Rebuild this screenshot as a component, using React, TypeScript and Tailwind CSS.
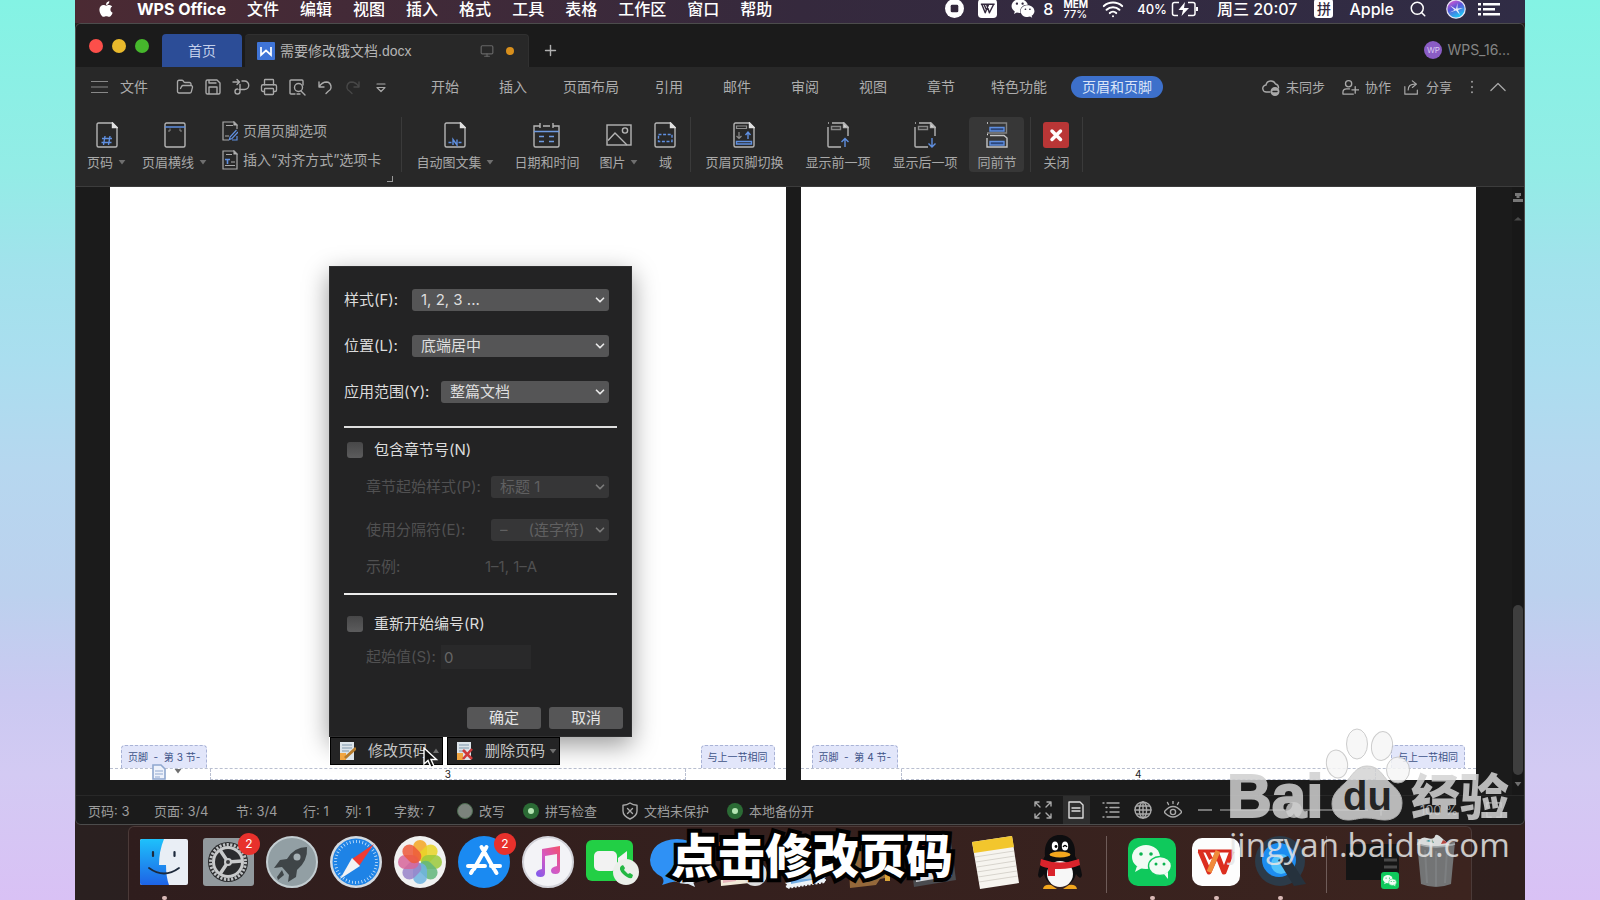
import React from 'react';
import { FaApple, FaWeixin } from 'react-icons/fa';
import {
    ChevronDown,
    FolderOpen,
    Monitor,
    Plus,
    Printer,
    Search,
    Wifi,
} from 'lucide-react';

type IconProps = { className?: string };

const APP_MENUS = ['文件', '编辑', '视图', '插入', '格式', '工具', '表格', '工作区', '窗口', '帮助'];
const RIBBON_TABS = ['开始', '插入', '页面布局', '引用', '邮件', '审阅', '视图', '章节', '特色功能'];

/* ---------- small shared pieces ---------- */

function Caret({ up = false }: { up?: boolean }) {
    return (
        <svg viewBox="0 0 8 6" className="w-2 h-1.5 shrink-0" fill="#6f6f6f" aria-hidden="true">
            {up ? <path d="M1 5 4 .6 7 5z" /> : <path d="M.6 1h6.8L4 5.4z" />}
        </svg>
    );
}

function Line({ children, className = 'w-[18px] h-[18px]', box = '0 0 18 18' }: { children: React.ReactNode; className?: string; box?: string }) {
    return (
        <svg viewBox={box} className={className} fill="none" stroke="#a9a9a9" strokeWidth="1.4" strokeLinecap="round" strokeLinejoin="round" aria-hidden="true">
            {children}
        </svg>
    );
}

/* ---------- macOS menu bar ---------- */

function WpsGlyph({ className }: IconProps) {
    return (
        <svg viewBox="0 0 20 20" className={className} aria-hidden="true">
            <rect width="20" height="20" rx="4" fill="#fff" />
            <path d="M3 5.500h14.500M4 5.500l3.600 9L11 6M9 5.500l3 9 4.500-9M6.500 6l2.700 6" fill="none" stroke="#33283c" strokeWidth="1.500" strokeLinejoin="round" />
        </svg>
    );
}

function MenuBar() {
    return (
        <header className="flex h-[23px] shrink-0 items-center bg-linear-to-r from-[#4b2a33] via-[#35293d] to-[#302c45] pr-[25px] pb-1.5 pl-[22px] text-base leading-5 font-medium text-white">
            <FaApple className="h-[18px] w-[18px]" />
            <nav className="flex items-center gap-[21px] pl-[22px] whitespace-nowrap">
                <button className="font-bold">WPS Office</button>
                {APP_MENUS.map((m) => <button key={m}>{m}</button>)}
            </nav>
            <div className="ml-auto flex items-center whitespace-nowrap">
                <svg viewBox="0 0 20 20" className="h-[19px] w-[19px]" aria-hidden="true">
                    <circle cx="10" cy="10" r="10" fill="#fff" />
                    <rect x="6" y="6" width="8" height="8" rx="1.5" fill="#33283c" />
                </svg>
                <WpsGlyph className="ml-[14px] h-[19px] w-[19px]" />
                <FaWeixin className="ml-[14px] h-[23px] w-6" />
                <span className="ml-2">8</span>
                <span className="ml-2.5 flex flex-col text-[11px] leading-[10px]">
                    <b className="text-[10px]">MEM</b>
                    <span>77%</span>
                </span>
                <Wifi className="ml-[13px] h-[22px] w-6" strokeWidth={2.2} />
                <span className="ml-3 text-[13px]">40%</span>
                <svg viewBox="0 0 28 16" className="ml-1 h-4 w-7" fill="none" stroke="#fff" strokeWidth="1.5" aria-hidden="true">
                    <path d="M8 1.5H3.5q-2 0-2 2v9q0 2 2 2H7M17 1.5h5q2 0 2 2v9q0 2-2 2h-5" />
                    <path d="M14 1 7.5 9H12l-1.500 6L18 7h-5z" fill="#fff" stroke="none" />
                    <path d="M26 6v4" strokeWidth="2" />
                </svg>
                <span className="ml-[18px]">周三 20:07</span>
                <span className="ml-[17px] flex h-[19px] w-[19px] items-center justify-center rounded-[3px] bg-white text-[14px] leading-none text-[#33283c]">拼</span>
                <span className="ml-4">Apple</span>
                <Search className="ml-[15px] h-[18px] w-[18px]" />
                <svg viewBox="0 0 20 20" className="ml-[19px] h-5 w-5" aria-hidden="true">
                    <defs>
                        <linearGradient id="siri" x1="0" y1="0" x2=".5" y2="1">
                            <stop offset="0" stopColor="#ff5ad0" />
                            <stop offset=".5" stopColor="#5b55d8" />
                            <stop offset="1" stopColor="#1ec8f5" />
                        </linearGradient>
                    </defs>
                    <circle cx="10" cy="10" r="9.200" fill="url(#siri)" stroke="#e8e4f4" strokeWidth="1.200" />
                    <path d="M10 10 4 6.500 8.500 11 3.500 13.500 10 11.500 14 16 12 11 17 9 11.500 9.500 11.500 4z" fill="#fff" opacity=".85" />
                </svg>
                <svg viewBox="0 0 22 14" className="ml-3 h-3.5 w-[22px]" fill="#fff" aria-hidden="true">
                    <path d="M0 1h3v2.500H0zM0 6h3v2.500H0zM0 11h3v2.500H0zM5 1h17v2.500H5zM5 6h12v2.500H5zM5 11h17v2.500H5z" />
                </svg>
            </div>
        </header>
    );
}

/* ---------- window title bar ---------- */

function TitleBar() {
    return (
        <div className="flex h-[43px] shrink-0 items-end bg-[#1b1b1b] pr-[14px] pl-[13px] text-sm leading-5">
            <div className="flex gap-[9px] self-center">
                <button aria-label="关闭窗口" className="h-3.5 w-3.5 rounded-full bg-[#fc4f4a]" />
                <button aria-label="最小化" className="h-3.5 w-3.5 rounded-full bg-[#e9b92c]" />
                <button aria-label="全屏" className="h-3.5 w-3.5 rounded-full bg-[#46b72c]" />
            </div>
            <button className="ml-[13px] h-[33px] w-20 rounded-t-[4px] bg-[#2c4d97] text-[#c3cfea]">首页</button>
            <div className="ml-[3px] flex h-[33px] w-[284px] items-center rounded-t-[4px] border-t border-r border-[#303030] bg-[#282828] pr-[14px] pl-3 text-[#b4b4b4]">
                <svg viewBox="0 0 18 18" className="h-[18px] w-[18px]" aria-hidden="true">
                    <rect width="18" height="18" rx="1" fill="#3f74d6" />
                    <path d="M4 5v8l5-4.500L14 13V5" fill="none" stroke="#fff" strokeWidth="1.700" />
                </svg>
                <span className="ml-[5px] font-['Liberation_Sans','Noto_Sans_CJK_SC',sans-serif]">需要修改饿文档.docx</span>
                <Monitor className="ml-auto h-3.5 w-3.5 text-[#666]" strokeWidth={2} />
                <span className="ml-3 h-2 w-2 rounded-full bg-[#d88f1c]" />
            </div>
            <button aria-label="新建标签" className="mb-2 ml-[13px] text-[#b0b0b0]"><Plus className="h-[17px] w-[17px]" /></button>
            <div className="mb-[7px] ml-auto flex items-center gap-[5px] text-[#858585]">
                <span className="flex h-[18px] w-[18px] items-center justify-center rounded-full bg-[#8a5cc4] text-[8px] text-[#d9c9f0]">WP</span>
                WPS_16...
            </div>
        </div>
    );
}

/* ---------- tabs and quick access ---------- */

function QuickTools() {
    return (
        <div className="ml-7 flex items-center gap-2.5 text-[#a9a9a9]">
            <button aria-label="打开"><FolderOpen className="h-[18px] w-[18px]" strokeWidth={1.8} /></button>
            <button aria-label="保存">
                <Line><path d="M2 3.500Q2 2 3.500 2H13l3 3v9.500q0 1.500-1.500 1.500h-11Q2 16 2 14.500zM5 16V9h8v7M5 2v3h7" /></Line>
            </button>
            <button aria-label="输出为PDF">
                <Line><path d="M1 4h6M5 1.500 7.500 4 5 6.500M10 3h2.500a4 4 0 0 1 0 8.500H7M8 6.500v7a2.500 2.500 0 1 1-2.500-2.500" /></Line>
            </button>
            <button aria-label="打印"><Printer className="h-[18px] w-[18px]" strokeWidth={1.8} /></button>
            <button aria-label="打印预览">
                <Line><path d="M7 16H3q-1 0-1-1V3q0-1 1-1h11q1 0 1 1v4M13 13l4 4M12 16H9" /><circle cx="10.500" cy="9.500" r="4" /></Line>
            </button>
            <button aria-label="撤销">
                <Line><path d="M3 4v5h5M3 9q3-5 7.500-5a4.800 4.800 0 0 1 2 9L10 15.500" /></Line>
            </button>
            <button aria-label="恢复" disabled>
                <Line><path d="M15 4v5h-5M15 9q-3-5-7.500-5a4.800 4.800 0 0 0-2 9L8 15.500" stroke="#474747" /></Line>
            </button>
            <button aria-label="自定义快速访问">
                <Line><path d="M5 6h8M5 9.500h8L9 13.500z" strokeWidth="1.200" /></Line>
            </button>
        </div>
    );
}

function TabRow() {
    return (
        <div className="flex h-[42px] shrink-0 items-center pr-[18px] pb-0.5 pl-[15px] text-sm leading-5 whitespace-nowrap text-[#adadad]">
            <button className="flex items-center gap-3">
                <svg viewBox="0 0 17 12" className="h-3 w-[17px]" stroke="#888" aria-hidden="true"><path d="M0 .5h17M0 6h17M0 11.500h17" /></svg>
                文件
            </button>
            <QuickTools />
            <nav className="ml-[21px] flex items-center">
                {RIBBON_TABS.map((t) => (
                    <button key={t} className={t.length > 2 ? 'px-4' : 'px-5'}>{t}</button>
                ))}
                <button className="ml-2 h-[22px] rounded-full bg-[#3d70cb] px-[11px] text-[#dbe5f7]">页眉和页脚</button>
            </nav>
            <div className="ml-auto flex items-center text-[13px]">
                <button className="flex items-center gap-1.5">
                    <Line><path d="M8 14H4.500a3.500 3.500 0 0 1-.5-7 5 5 0 0 1 9.500-1 4 4 0 0 1 3 4" /><circle cx="13" cy="13.500" r="3.800" fill="#a9a9a9" /><path d="M11 13.500h4" stroke="#282828" /></Line>
                    未同步
                </button>
                <button className="ml-[17px] flex items-center gap-1.5">
                    <Line className="h-[17px] w-[17px]"><circle cx="7" cy="5" r="3.300" /><path d="M1 16v-2q0-3.500 4-3.500h3M1 16h11M14 8v7M10.500 11.500h7" /></Line>
                    协作
                </button>
                <button className="ml-[13px] flex items-center gap-[7px]">
                    <Line className="h-[15px] w-[15px]"><path d="M1 8v9h15v-5M5 12q0-7 8-7M10 1l5 4-5 4" /></Line>
                    分享
                </button>
                <button aria-label="更多" className="ml-[18px]">
                    <svg viewBox="0 0 4 16" className="h-3.5 w-1" fill="#999" aria-hidden="true"><circle cx="2" cy="2" r="1.200" /><circle cx="2" cy="8" r="1.200" /><circle cx="2" cy="14" r="1.200" /></svg>
                </button>
                <button aria-label="收起功能区" className="ml-4"><Line className="h-4 w-4"><path d="M1 13 9 5l8 8" /></Line></button>
            </div>
        </div>
    );
}

/* ---------- ribbon ---------- */

function Sheet({ children }: { children?: React.ReactNode }) {
    return (
        <svg viewBox="0 0 22 26" className="h-[26px] w-[22px]" fill="none" strokeWidth="1.400" aria-hidden="true">
            <path d="M16.500 1H2.500Q1 1 1 2.500v21Q1 25 2.500 25h17q1.500 0 1.500-1.500v-18z" stroke="#b5b5b5" />
            <path d="M16.500 1v4.500H21z" fill="#e0e0e0" stroke="#e0e0e0" />
            {children}
        </svg>
    );
}

function RibbonItem({ icon, label, caret = false, active = false }: { icon: React.ReactNode; label: string; caret?: boolean; active?: boolean }) {
    return (
        <button className={`flex h-[55px] flex-col items-center rounded pt-[5px] ${active ? 'bg-[#373737] px-2' : ''}`}>
            <span className="flex h-[26px] items-center">{icon}</span>
            <span className="mt-1 flex items-center gap-[5px] leading-5">
                {label}
                {caret && <Caret />}
            </span>
        </button>
    );
}

function Divider() {
    return <div className="h-[55px] w-px bg-[#3a3a3a]" />;
}

function Ribbon() {
    return (
        <div className="flex h-[78px] shrink-0 border-b border-[#3c3c3c] pt-2 pl-[11px] text-[13px] whitespace-nowrap text-[#a8a8a8]">
            <div className="relative flex gap-4 pr-5">
                <RibbonItem label="页码" caret icon={<Sheet><path d="M9 14l-1.500 9M14 14l-1.500 9M6 16.500h10M5.500 20.500h10" stroke="#5f8fe0" /></Sheet>} />
                <RibbonItem
                    label="页眉横线"
                    caret
                    icon={(
                        <svg viewBox="0 0 22 26" className="h-[26px] w-[22px]" fill="none" strokeWidth="1.400" aria-hidden="true">
                            <rect x="1" y="1" width="20" height="24" rx="1.500" stroke="#b5b5b5" />
                            <path d="M1 5h20" stroke="#5f8fe0" />
                            <path d="M4 9h2V6.500M18 9h-2V6.500" stroke="#888" strokeWidth="1" />
                        </svg>
                    )}
                />
                <div className="-ml-px flex flex-col gap-[9px] pt-1 text-sm leading-5">
                    <button className="flex items-center gap-[5px]">
                        <svg viewBox="0 0 16 20" className="h-5 w-4" fill="none" stroke="#a9a9a9" strokeWidth="1.200" aria-hidden="true">
                            <path d="M15 8V4l-3-3H1v18h6M4 4.500h7M3 15h4" />
                            <path d="M12 1v3h3z" fill="#ddd" />
                            <path d="M14.500 9 8 16l-.5 2.500L10 17.500 16 11M15 15v4h-5" stroke="#5f8fe0" />
                        </svg>
                        页眉页脚选项
                    </button>
                    <button className="flex items-center gap-[5px]">
                        <svg viewBox="0 0 16 20" className="h-5 w-4" fill="none" stroke="#a9a9a9" strokeWidth="1.200" aria-hidden="true">
                            <path d="M12 1H1v18h14V4zM4 4.500h6M3 15.500h10M9 12h4" />
                            <path d="M12 1v3h3z" fill="#ddd" />
                            <path d="M3 9.500h5M5.500 9.500V14" stroke="#5f8fe0" strokeWidth="1.600" />
                        </svg>
                        插入“对齐方式”选项卡
                    </button>
                </div>
                <span className="absolute right-2 bottom-1 h-1.5 w-1.5 border-r border-b border-[#999]" />
            </div>
            <Divider />
            <div className="flex gap-5 px-[14px]">
                <RibbonItem label="自动图文集" caret icon={<Sheet><path d="M4.500 20.500h3M14.500 20.500h3M9 23v-5.500l4 5.500v-5.500" stroke="#5f8fe0" /></Sheet>} />
                <RibbonItem
                    label="日期和时间"
                    icon={(
                        <svg viewBox="0 0 27 26" className="h-[26px] w-[27px]" fill="none" stroke="#b5b5b5" strokeWidth="1.400" aria-hidden="true">
                            <path d="M7 4H1v19.500Q1 25 2.500 25h22q1.500 0 1.500-1.500V4h-6M10 4h7M7 1v5M20 1v5" />
                            <path d="M1 9.500h25M6 14.500h5M16 14.500h5M6 19.500h5M16 19.500h5" stroke="#6f9ae0" />
                        </svg>
                    )}
                />
                <RibbonItem
                    label="图片"
                    caret
                    icon={(
                        <svg viewBox="0 0 26 22" className="h-[22px] w-[26px]" fill="none" stroke="#b5b5b5" strokeWidth="1.400" aria-hidden="true">
                            <rect x="1" y="1" width="24" height="20" />
                            <path d="M2 16.500 9 9l12 12" />
                            <circle cx="19" cy="6.500" r="2.600" />
                        </svg>
                    )}
                />
                <div className="-ml-1 flex">
                    <RibbonItem label="域" icon={<Sheet><rect x="4.500" y="12.500" width="13.500" height="7" stroke="#5f8fe0" strokeDasharray="3 1.600" /></Sheet>} />
                </div>
            </div>
            <Divider />
            <div className="flex gap-[22px] pr-3 pl-[14px]">
                <RibbonItem
                    label="页眉页脚切换"
                    icon={<Sheet><path d="M3.500 4h10v2.500h-10zM6 10v6M3.500 14 6 16.500 8.500 14" stroke="#8d8d8d" strokeWidth="1.200" /><path d="M15 17v-6.500M12.500 13 15 10l2.500 3M3.500 19.500h15v2.500h-15z" stroke="#5f8fe0" /></Sheet>}
                />
                <RibbonItem
                    label="显示前一项"
                    icon={(
                        <svg viewBox="0 0 22 26" className="h-[26px] w-[22px]" fill="none" stroke="#b5b5b5" strokeWidth="1.400" aria-hidden="true">
                            <path d="M1 5v19q0 1 1 1h12M1 1h1M5 1h12l4 4v9" />
                            <path d="M16.500 1v4.500H21z" fill="#e0e0e0" />
                            <path d="M4.500 4.500h9v3h-9z" stroke="#888" />
                            <path d="M18 25v-8M14.500 20 18 16.500l3.500 3.500" stroke="#5f8fe0" />
                        </svg>
                    )}
                />
                <RibbonItem
                    label="显示后一项"
                    icon={(
                        <svg viewBox="0 0 22 26" className="h-[26px] w-[22px]" fill="none" stroke="#b5b5b5" strokeWidth="1.400" aria-hidden="true">
                            <path d="M1 5v19q0 1 1 1h12M1 1h1M5 1h12l4 4v9" />
                            <path d="M16.500 1v4.500H21z" fill="#e0e0e0" />
                            <path d="M4.500 4.500h9v3h-9z" stroke="#888" />
                            <path d="M18 16v8.500M14.500 21.500 18 25l3.500-3.500" stroke="#5f8fe0" />
                        </svg>
                    )}
                />
            </div>
            <RibbonItem
                active
                label="同前节"
                icon={(
                    <svg viewBox="0 0 22 26" className="h-[26px] w-[22px]" fill="none" strokeWidth="1.400" aria-hidden="true">
                        <path d="M4 1h16.500v10H1" stroke="#858585" />
                        <path d="M1 1h1M1 12.500h1" stroke="#e0e0e0" />
                        <path d="M4 5.500h14V9H4zM4 19.500h14V23H4z" stroke="#5f8fe0" fill="#2c477c" />
                        <path d="M4 13.500h14l3 2.500v9H1v-9" stroke="#c5c5c5" />
                    </svg>
                )}
            />
            <div className="flex gap-3 pl-1.5">
                <Divider />
                <RibbonItem
                    label="关闭"
                    icon={(
                        <svg viewBox="0 0 26 26" className="h-[26px] w-[26px]" aria-hidden="true">
                            <rect width="26" height="26" rx="3" fill="#b93636" />
                            <path d="M9 9l8.500 8.500M17.500 9 9 17.500" stroke="#fff" strokeWidth="3.500" strokeLinecap="round" />
                        </svg>
                    )}
                />
                <Divider />
            </div>
        </div>
    );
}

/* ---------- page number popup ---------- */

function Dropdown({ id, value, disabled = false, className }: { id: string; value: string; disabled?: boolean; className: string }) {
    return (
        <div className={`relative ${className}`}>
            <select
                id={id}
                defaultValue={value}
                disabled={disabled}
                className={`block h-[22px] w-full appearance-none rounded-[3px] pl-[9px] leading-5 opacity-100 ${disabled ? 'bg-[#363637] text-[#606061]' : 'bg-[#555556] text-[#dedede]'}`}
            >
                <option>{value}</option>
            </select>
            <ChevronDown className={`pointer-events-none absolute top-1 right-0.5 h-3.5 w-3.5 ${disabled ? 'text-[#7b7b7b]' : 'text-[#e8e8e8]'}`} strokeWidth={3} />
        </div>
    );
}

function NumberDialog() {
    const check = 'h-4 w-4 appearance-none rounded-[3px] bg-linear-to-b from-[#474748] to-[#5c5c5d]';
    return (
        <form className="flex w-[303px] flex-col border border-[#2f2f30] bg-[#232324] px-[14px] pt-[22px] pb-[7px] text-[15px] leading-5 text-[#dcdcdc] shadow-[0_8px_24px_rgba(0,0,0,0.4)]">
            <div className="flex flex-col gap-6 pr-2">
                <div className="flex h-[22px] items-center justify-between">
                    <label htmlFor="fmt">样式(F):</label>
                    <Dropdown id="fmt" value="1, 2, 3 ..." className="w-[197px]" />
                </div>
                <div className="flex h-[22px] items-center justify-between">
                    <label htmlFor="pos">位置(L):</label>
                    <Dropdown id="pos" value="底端居中" className="w-[197px]" />
                </div>
                <div className="flex h-[22px] items-center justify-between">
                    <label htmlFor="scope">应用范围(Y):</label>
                    <Dropdown id="scope" value="整篇文档" className="w-[168px]" />
                </div>
            </div>
            <hr className="mt-[23px] border-t-2 border-[#dedede]" />
            <div className="mt-[14px] flex h-4 items-center gap-[11px] pl-[3px]">
                <input id="chapter" type="checkbox" className={check} />
                <label htmlFor="chapter">包含章节号(N)</label>
            </div>
            <div className="mt-[18px] flex flex-col gap-[21px] pr-2 pl-[22px] text-[#505051]">
                <div className="flex h-[22px] items-center justify-between">
                    <label htmlFor="chapter-style">章节起始样式(P):</label>
                    <Dropdown id="chapter-style" value="标题 1" disabled className="w-[118px]" />
                </div>
                <div className="flex h-[22px] items-center justify-between">
                    <label htmlFor="sep">使用分隔符(E):</label>
                    <Dropdown id="sep" value={'–\u00a0\u00a0\u00a0\u00a0 (连字符)'} disabled className="w-[118px]" />
                </div>
            </div>
            <div className="mt-4 flex h-5 items-center pl-[22px] text-[#505051]">
                <span className="w-[119px]">示例:</span>
                <output>1–1, 1–A</output>
            </div>
            <hr className="mt-4 border-t-2 border-[#ececec]" />
            <div className="mt-[21px] flex h-4 items-center gap-[11px] pl-[3px]">
                <input id="restart" type="checkbox" className={check} />
                <label htmlFor="restart">重新开始编号(R)</label>
            </div>
            <div className="mt-[13px] flex h-6 items-center pl-[22px] text-[#505051]">
                <label htmlFor="start" className="w-[75px]">起始值(S):</label>
                <input id="start" defaultValue="0" disabled className="h-6 w-[90px] bg-[#29292a] px-[3px] text-[#666]" />
            </div>
            <div className="-mr-1.5 mt-[38px] flex justify-end gap-2 text-[#e4e4e4]">
                <button type="button" className="h-[22px] w-[74px] rounded-[3px] bg-[#565657]">确定</button>
                <button type="button" className="h-[22px] w-[74px] rounded-[3px] bg-[#565657]">取消</button>
            </div>
        </form>
    );
}

function PageTool({ label, remove = false }: { label: string; remove?: boolean }) {
    return (
        <button className="flex h-7 w-[113px] items-center border border-black bg-[#242425] pl-[9px] text-[15px] leading-5 text-[#c4c4c4]">
            <svg viewBox="0 0 16 18" className="h-[18px] w-4" aria-hidden="true">
                <path d="M0 0h14v18H0z" fill="#dce4ea" />
                <path d="M2 3h10M2 6h10M2 9h7" stroke="#7f97ab" />
                <path d="M0 11h6v7H0z" fill="#f2a642" />
                {remove
                    ? <path d="m6 8 9 9M15 7l-9 10" stroke="#cf3a3a" strokeWidth="2.600" />
                    : <path d="m5 16 11-10" stroke="#b57b2c" strokeWidth="3" />}
            </svg>
            <span className="mr-1 ml-3">{label}</span>
            <Caret up={!remove} />
        </button>
    );
}

/* ---------- document area ---------- */

function Paper({ section, children }: { section: number; children?: React.ReactNode }) {
    const tag = 'flex h-[23px] items-center border border-b-0 border-dashed border-[#a9b3d6] bg-[#e2e6fa] px-1.5 text-[10px] text-[#3f5488]';
    return (
        <section className="relative flex min-w-0 flex-1 flex-col justify-end bg-white">
            <div className="flex justify-between border-b border-dashed border-[#b9bfd0] px-[11px]">
                <span className={`${tag} rounded-t whitespace-pre`}>{`页脚  -  第 ${section} 节-`}</span>
                <span className={`${tag} rounded-t`}>与上一节相同</span>
            </div>
            <div className="mx-[100px] flex h-[11px] items-center justify-center border-x border-b border-dashed border-[#b9bfd0] text-[10px] leading-none text-[#222]">{section}</div>
            {children}
        </section>
    );
}

function DocumentArea() {
    return (
        <main className="flex min-h-0 flex-1 bg-[#1b1b1b] pl-[34px]">
            <div className="flex flex-1 gap-[15px] pr-9 pb-[15px]">
                <Paper section={3}>
                    <div className="absolute bottom-0 left-[42px] flex items-start gap-2">
                        <svg viewBox="0 0 14 16" className="h-4 w-3.5" fill="none" stroke="#8fa7cf" aria-hidden="true">
                            <path d="M1 1h8l4 4v10H1z" fill="#eef2fb" strokeWidth="1.600" />
                            <path d="M3 7h8M3 10h8M3 13h5" strokeWidth="1.200" />
                        </svg>
                        <span className="mt-1 flex"><Caret /></span>
                    </div>
                    <div className="absolute bottom-[15px] left-[219px] z-10">
                        <NumberDialog />
                        <div className="flex w-max gap-1 bg-white pl-px">
                            <PageTool label="修改页码" />
                            <PageTool label="删除页码" remove />
                        </div>
                        <svg viewBox="0 0 16 22" className="pointer-events-none absolute -bottom-1 left-[94px] h-[22px] w-4" aria-hidden="true">
                            <path d="M1 1v16l4-3.500 3 7 3-1.300-3-6.700h5.500z" fill="#111" stroke="#fff" strokeWidth="1.400" />
                        </svg>
                    </div>
                </Paper>
                <Paper section={4} />
            </div>
            <div className="flex w-3 flex-col items-center bg-[#181818] pt-1.5 pb-2">
                <svg viewBox="0 0 10 32" className="h-8 w-2.5" fill="#777" aria-hidden="true">
                    <path d="M2 0h6v3H6.500v2h-3V3H2zM0 6h10v3H0z" />
                    <path d="M1 27.500 5 24l4 3.500z" fill="#4a4a4a" />
                </svg>
                <div className="mt-auto h-[170px] w-2.5 rounded-full bg-[#3e3e3e]" />
                <span className="mt-1.5 flex"><Caret /></span>
            </div>
        </main>
    );
}

/* ---------- status bar ---------- */

function GreenDot() {
    return <span className="flex h-4 w-4 items-center justify-center rounded-full bg-[#2b6b35]"><span className="h-1.5 w-1.5 rounded-full bg-[#b6e6b4]" /></span>;
}

function StatusBar() {
    return (
        <footer className="flex h-[29px] shrink-0 items-center border-t border-[#282828] bg-[#1b1b1b] pr-[22px] pl-3 text-[13px] leading-5 whitespace-nowrap text-[#9d9d9d]">
            <div className="flex items-center pt-0.5">
                <span className="w-[66px]">页码: 3</span>
                <span className="w-[82px]">页面: 3/4</span>
                <span className="w-[67px]">节: 3/4</span>
                <span className="w-[42px]">行: 1</span>
                <span className="w-[49px]">列: 1</span>
                <span className="w-[63px]">字数: 7</span>
                <span className="flex items-center gap-1.5"><span className="h-4 w-4 rounded-full border border-[#4c6b50] bg-[#7b837c]" />改写</span>
                <span className="ml-[18px] flex items-center gap-1.5"><GreenDot />拼写检查</span>
                <span className="ml-6 flex items-center gap-[5px]">
                    <Line><path d="M9 1q3 2.300 7 2.300V9q0 5-7 8-7-3-7-8V3.300Q6 3.300 9 1zM6.500 6.500l5 5M11.500 6.500l-5 5" /></Line>
                    文档未保护
                </span>
                <span className="ml-[18px] flex items-center gap-1.5"><GreenDot />本地备份开</span>
            </div>
            <div className="ml-auto flex h-full items-center">
                <button aria-label="全屏显示"><Line><path d="M1 5V1h4M1 1l5 5M13 1h4v4M17 1l-5 5M1 13v4h4M1 17l5-5M13 17h4v-4M17 17l-5-5" /></Line></button>
                <button aria-label="页面视图" className="ml-[11px] flex h-full w-[27px] items-center justify-center bg-[#2e2e2e]">
                    <Line><path d="M2 1h11l3 3v13H2zM5 7h8M5 10h8" stroke="#dcdcdc" /></Line>
                </button>
                <button aria-label="大纲视图" className="ml-3"><Line><path d="M1 2h1M5 2h12M4 6.500h1M8 6.500h9M4 11h1M8 11h9M1 16h1M5 16h12" /></Line></button>
                <button aria-label="Web视图" className="ml-[14px]"><Line><circle cx="9" cy="9" r="8" /><ellipse cx="9" cy="9" rx="3.600" ry="8" /><path d="M9 1v16M1 9h16M2.500 5h13M2.500 13h13" /></Line></button>
                <button aria-label="护眼模式" className="ml-3"><Line><path d="M0 11q9-11 18 0-9 10-18 0zM9 0v2.500M3.500 1.500l1 2M14.500 1.500l-1 2" /><circle cx="9" cy="11" r="2.600" /></Line></button>
                <button aria-label="缩小" className="ml-4 h-0.5 w-3.5 bg-[#777]" />
                <input
                    aria-label="缩放"
                    type="range"
                    defaultValue={50}
                    className="ml-2 h-4 w-[148px] appearance-none bg-transparent [&::-webkit-slider-runnable-track]:h-0.5 [&::-webkit-slider-runnable-track]:bg-[#666] [&::-webkit-slider-thumb]:-mt-[7px] [&::-webkit-slider-thumb]:h-4 [&::-webkit-slider-thumb]:w-4 [&::-webkit-slider-thumb]:appearance-none [&::-webkit-slider-thumb]:rounded-full [&::-webkit-slider-thumb]:bg-[#aaa]"
                />
                <button aria-label="放大" className="ml-1"><Plus className="h-[18px] w-[18px]" strokeWidth={1.5} /></button>
                <span className="ml-[30px]">100 %</span>
                <button aria-label="适应页面" className="ml-7"><Line className="h-4 w-4"><path d="M1 6V1h5M12 1h5v5M1 12v5h5M12 17h5v-5" /></Line></button>
            </div>
        </footer>
    );
}

/* ---------- dock ---------- */

const PETALS = ['#f5a623', '#e9d528', '#9cc93d', '#63b77c', '#6fb3e0', '#9884c9', '#d7679b', '#ee5a3a'];

function FinderIcon() {
    return (
        <>
            <defs><linearGradient id="finder" x1="0" y1="0" x2="0" y2="1"><stop stopColor="#1ec1fb" /><stop offset="1" stopColor="#1e63e6" /></linearGradient></defs>
            <rect x="2" y="3" width="48" height="46" rx="2" fill="#e9eef5" />
            <path d="M4 3h22q-5 12-5 26h7q0 12 3 20H4q-2 0-2-2V5q0-2 2-2z" fill="url(#finder)" />
            <path d="M15 16v4M36.500 16v4" stroke="#1d2a3c" strokeWidth="2.200" strokeLinecap="round" />
            <path d="M11 32q15 11 30 0" fill="none" stroke="#1d2a3c" strokeWidth="1.800" strokeLinecap="round" />
        </>
    );
}

function SettingsIcon() {
    return (
        <>
            <rect x="1" y="2" width="51" height="48" rx="3" fill="#92999d" />
            <circle cx="26" cy="26" r="20" fill="#2b2c2e" />
            <circle cx="26" cy="26" r="17.500" fill="none" stroke="#bfc2c4" strokeWidth="3" strokeDasharray="2.200 1.460" />
            <circle cx="26" cy="26" r="14.500" fill="none" stroke="#c8cacb" strokeWidth="3" />
            <path d="M26 26l14-1M26 26l-8 12M26 26l-8-12" stroke="#c8cacb" strokeWidth="3.500" />
            <circle cx="26" cy="26" r="3" fill="#3a3b3d" stroke="#c8cacb" strokeWidth="2" />
        </>
    );
}

function RocketIcon() {
    return (
        <>
            <circle cx="26" cy="26" r="25" fill="#929fa4" stroke="#c3cdd1" strokeWidth="2" />
            <path d="M41 11q-13 0-20 12l-7 1-6 8 8-1 7 8-1 7 8-5 1-7q11-9 10-23z" fill="#3f4548" />
            <path d="M16 34l-5 7 1 3 6-5z" fill="#3f4548" />
            <circle cx="31" cy="21" r="3.500" fill="#a5b0b4" />
        </>
    );
}

function SafariIcon() {
    return (
        <>
            <circle cx="26" cy="26" r="26" fill="#d4dae0" />
            <circle cx="26" cy="26" r="23.500" fill="#1e83e6" />
            <circle cx="26" cy="26" r="20.500" fill="none" stroke="#cfe6fb" strokeWidth="3" strokeDasharray=".8 2.400" />
            <path d="M44 8 29 30l-7-7z" fill="#f03c34" />
            <path d="M10 43 22 22l8 8z" fill="#f2f2f4" />
        </>
    );
}

function PhotosIcon() {
    return (
        <>
            <circle cx="26" cy="26" r="26" fill="#f1f1f1" />
            {PETALS.map((c, i) => (
                <rect key={c} x="19" y="4" width="14" height="21" rx="7" fill={c} opacity=".86" transform={`rotate(${i * 45} 26 26)`} />
            ))}
        </>
    );
}

function StoreIcon() {
    return (
        <>
            <circle cx="26" cy="26" r="26" fill="#1a8af2" />
            <path d="M28.500 11 16 33M23.500 11 36 33M10 30h17M33 30h9M13 37l1.500-2.500M38.500 37 37 34.500" stroke="#fff" strokeWidth="4" strokeLinecap="round" fill="none" />
        </>
    );
}

function MusicIcon() {
    return (
        <>
            <defs><linearGradient id="music" x1="0" y1="1" x2="1" y2="0"><stop stopColor="#7a5af0" /><stop offset=".5" stopColor="#d45ac4" /><stop offset="1" stopColor="#f4506a" /></linearGradient></defs>
            <circle cx="26" cy="26" r="25" fill="#f3f3f7" stroke="#d3d3da" strokeWidth="2" />
            <path d="M20 13l18-3v24q0 4-4.500 4t-4.500-3.500 6-4.500V18l-12 2v17q0 4-4.500 4T14 37.500t6-4.500z" fill="url(#music)" />
        </>
    );
}

function FaceTimeIcon() {
    return (
        <>
            <rect x="0" y="4" width="47" height="41" rx="6" fill="#22cf45" />
            <rect x="8" y="15" width="23" height="20" rx="5" fill="#f2f2f2" />
            <path d="M32 22l9-7v20l-9-7z" fill="#f2f2f2" />
            <circle cx="40" cy="36" r="13" fill="#ebefea" />
            <path d="M35 30q-3 3 2 8t9 4l1-3-3-2-2 1-4-4 1-2-2-3z" fill="#23b843" />
        </>
    );
}

function MessagesIcon() {
    return (
        <>
            <path d="M27 3q25 1 25 21T28 45q-8 1-16 4 3-4 0-8Q0 35 0 24 2 4 27 3z" fill="#2f91f5" />
            <ellipse cx="36" cy="39" rx="15" ry="9" fill="#dfe9f3" />
            <path d="M42 43l3 8-9-4z" fill="#dfe9f3" />
        </>
    );
}

function CalendarIcon() {
    return (
        <>
            <path d="M5 6l38-2 2 42-38 4z" fill="#f2ead9" />
            <path d="M5 6h20v9H5z" fill="#f3c33a" />
            <path d="M8 22l14-1v24l-13 2z" fill="#e8b6bd" />
            <circle cx="41" cy="38" r="12" fill="#dfdfe1" />
            <circle cx="41" cy="38" r="7" fill="none" stroke="#85878b" strokeWidth="2" />
        </>
    );
}

function MailIcon() {
    return (
        <>
            <path d="M6 12l38-4 3 38-38 6z" fill="#eef3f8" stroke="#eef3f8" strokeWidth="2" strokeDasharray="2 1.500" />
            <path d="M10 16l31-3 3 29-31 6z" fill="#74aee4" />
            <path d="M12 44l14-16 18 14z" fill="#b8cfdf" />
        </>
    );
}

function ContactsIcon() {
    return (
        <>
            <path d="M6 8l38-3 4 36-10 2-4 6-26 3z" fill="#94683a" />
            <path d="M40 16h6v6h-6zM43 38l5-1v8h-5z" fill="#d9a437" />
        </>
    );
}

function ScreenIcon() {
    return (
        <>
            <path d="M3 10l42-4 5 38-42 7z" fill="#4a4b4f" />
            <path d="M7 13l36-3 3 30-36 6z" fill="#dcdde0" />
            <path d="M10 10l32-3v5H10z" fill="#b23b38" />
        </>
    );
}

function NotesIcon() {
    return (
        <>
            <path d="M2 6l40-6 7 47-39 6z" fill="#f6f4ef" />
            <path d="M2 6l40-6 2 11L4 17z" fill="#f2c62d" />
            <path d="M5 21l39-6M6 26l39-6M7 31l38-6M7 36l39-6M8 41l39-6M9 46l39-6" stroke="#cfccc4" strokeWidth=".8" />
        </>
    );
}

function QqIcon() {
    return (
        <>
            <path d="M26-1c12 0 16 10 15 21q6 10 7 19-1 6-6-1-3 12-16 12T10 38q-5 7-6 1 1-9 7-19C10 9 14-1 26-1z" fill="#0d0d0f" />
            <ellipse cx="26" cy="38" rx="13" ry="13" fill="#f7f7f7" />
            <path d="M7 23q19 7 38 0l1 6q-9 4-20 4h-5v7h-7v-8q-6-1-8-3z" fill="#d9232b" />
            <ellipse cx="21" cy="10" rx="3.200" ry="4.600" fill="#fff" />
            <ellipse cx="31" cy="10" rx="3.200" ry="4.600" fill="#fff" />
            <circle cx="22" cy="10.500" r="1.400" />
            <path d="M29 11q2-3 4 0" fill="none" stroke="#000" strokeWidth="1.300" />
            <ellipse cx="26" cy="18.500" rx="10.500" ry="3" fill="#f3a61d" />
            <path d="M9 53q1-5 8-4l6 4zM43 53q-1-5-8-4l-6 4z" fill="#f3a61d" />
        </>
    );
}

function WeChatShape() {
    return (
        <>
            <ellipse cx="20" cy="21" rx="14" ry="12" fill="#f2fbf4" />
            <path d="M11 30l-2 6 7-4z" fill="#f2fbf4" />
            <circle cx="15" cy="18" r="1.800" fill="#0bb34f" />
            <circle cx="25" cy="18" r="1.800" fill="#0bb34f" />
            <ellipse cx="34" cy="30" rx="11.500" ry="9.500" fill="#f2fbf4" stroke="#0fc95c" strokeWidth="1.400" />
            <path d="M38 38l4 5 0-7z" fill="#f2fbf4" />
            <circle cx="30" cy="28" r="1.500" fill="#0bb34f" />
            <circle cx="38" cy="28" r="1.500" fill="#0bb34f" />
        </>
    );
}

function WeChatIcon() {
    return (
        <>
            <rect x="2" y="2" width="48" height="48" rx="10" fill="#0fc95c" />
            <WeChatShape />
        </>
    );
}

function WpsIcon() {
    return (
        <>
            <rect x="2" y="2" width="48" height="48" rx="10" fill="#fdfdfd" />
            <path d="M8 15h35" stroke="#d8281c" strokeWidth="3" />
            <path d="M10 15l9 21 8-18 7 18 8-21" fill="none" stroke="#dc2e1f" strokeWidth="5" strokeLinejoin="round" />
            <path d="M19 36l9-21" stroke="#f08a3a" strokeWidth="5" />
            <path d="M17 15l4 8" stroke="#dc2e1f" strokeWidth="4" />
        </>
    );
}

function QuickTimeIcon() {
    return (
        <>
            <circle cx="26" cy="25" r="25" fill="#2c3b49" />
            <circle cx="25" cy="24" r="17" fill="#1d8df0" />
            <circle cx="27" cy="28" r="10" fill="#52c3fa" />
            <path d="M24 24l10-4 18 28-12 2z" fill="#26323d" />
        </>
    );
}

function ThumbIcon() {
    return (
        <>
            <rect x="0" y="8" width="53" height="36" fill="#151515" />
            <path d="M38 24h13M38 31h13" stroke="#484848" strokeWidth="3" />
            <circle cx="5" cy="18" r="1.800" fill="#ddd" />
            <rect x="35" y="36" width="18" height="17" rx="3" fill="#0fc95c" />
            <g transform="translate(35 36) scale(.34)"><WeChatShape /></g>
        </>
    );
}

function TrashIcon() {
    return (
        <>
            <path d="M7 6h38l-4 42q-15 6-30 0z" fill="#7c8285" opacity=".85" />
            <path d="M8 8q2-8 9-6t8-2 9 4 10 4q-18 5-36 0z" fill="#d9dcdc" />
            <path d="M16 5l6-2 2 4z" fill="#3f8d8a" />
            <path d="M33 4l5 3-7 1z" fill="#b4443c" />
            <path d="M7 8q19 6 38 0" fill="none" stroke="#a5abad" strokeWidth="1.500" />
            <path d="M15 14l2 33M26 15v35M37 14l-2 33" stroke="#959b9e" strokeWidth="2" opacity=".3" />
        </>
    );
}

type DockApp = { name: string; icon: React.ReactNode; badge?: number; running?: boolean };

const DOCK: DockApp[][] = [
    [
        { name: '访达', icon: <FinderIcon />, running: true },
        { name: '系统偏好设置', icon: <SettingsIcon />, badge: 2 },
        { name: '启动台', icon: <RocketIcon /> },
        { name: 'Safari', icon: <SafariIcon /> },
        { name: '照片', icon: <PhotosIcon /> },
        { name: 'App Store', icon: <StoreIcon />, badge: 2 },
        { name: '音乐', icon: <MusicIcon /> },
        { name: 'FaceTime', icon: <FaceTimeIcon /> },
        { name: '信息', icon: <MessagesIcon /> },
        { name: '日历', icon: <CalendarIcon /> },
        { name: '邮件', icon: <MailIcon /> },
        { name: '通讯录', icon: <ContactsIcon /> },
        { name: '屏幕', icon: <ScreenIcon /> },
        { name: '备忘录', icon: <NotesIcon /> },
        { name: 'QQ', icon: <QqIcon /> },
    ],
    [
        { name: '微信', icon: <WeChatIcon />, running: true },
        { name: 'WPS', icon: <WpsIcon />, running: true },
        { name: 'QuickTime', icon: <QuickTimeIcon />, running: true },
    ],
    [
        { name: '最近窗口', icon: <ThumbIcon /> },
        { name: '废纸篓', icon: <TrashIcon /> },
    ],
];

function Dock() {
    return (
        <div className="flex h-[75px] shrink-0 justify-center bg-linear-to-r from-[#2a2020] to-[#2f1f1d] pt-px">
            <div className="flex rounded-t-md border border-b-0 border-[#4b3a38] bg-linear-to-r from-[#2f1d1d] to-[#3c241f] px-[3px]">
                {DOCK.map((group, g) => (
                    <React.Fragment key={g}>
                        {g > 0 && <div className="flex w-7 justify-center"><div className="mt-[9px] h-[57px] w-px bg-[#6f5c59]" /></div>}
                        {group.map((app) => (
                            <button key={app.name} aria-label={app.name} className="relative flex w-16 flex-col items-center pt-[9px]">
                                <svg viewBox="0 0 52 52" className="h-[52px] w-[52px] overflow-visible" aria-hidden="true">{app.icon}</svg>
                                {app.badge && (
                                    <span className="absolute top-1.5 right-0 flex h-[22px] w-[22px] items-center justify-center rounded-full bg-[#e8312c] text-xs text-white">{app.badge}</span>
                                )}
                                {app.running && <span className="mt-2 h-[5px] w-[5px] rounded-full bg-[#d9b9b6]" />}
                            </button>
                        ))}
                    </React.Fragment>
                ))}
            </div>
        </div>
    );
}

/* ---------- overlays ---------- */

function Watermark() {
    return (
        <div className="pointer-events-none absolute right-3 bottom-[37px] z-30 w-[284px] text-[#e6e6e6] opacity-85" aria-hidden="true">
            <svg viewBox="0 0 284 92" className="block h-[92px] w-[284px] overflow-visible" fontFamily="'Liberation Sans','Noto Sans CJK SC',sans-serif" fontWeight="700">
                <g fill="#f6f6f6" stroke="#c4c4c4" strokeWidth="1">
                    <ellipse cx="128" cy="16" rx="10.500" ry="15" />
                    <ellipse cx="153" cy="18" rx="10.500" ry="14.500" transform="rotate(8 153 18)" />
                    <ellipse cx="108" cy="36" rx="10.500" ry="14" transform="rotate(-10 108 36)" />
                    <ellipse cx="169" cy="42" rx="11.500" ry="13" />
                    <path d="M138 38c12 0 15 9 22 16 8 7 13 12 13 21 0 12-8 17-17 17-7 0-11-2-19-2s-11 2-18 2c-9 0-16-6-16-16 0-9 5-14 13-21 7-7 11-17 22-17z" fill="#d4d4d4" />
                </g>
                <text x="-2" y="89" fontSize="62" fill="#cfcfcf" stroke="#cfcfcf" strokeWidth="2">Bai</text>
                <text x="114" y="82" fontSize="40" fill="#262626">du</text>
                <text x="182" y="87" fontSize="49" fontWeight="900" fill="#d4d4d4">经验</text>
            </svg>
            <p className="mt-[7px] font-['Open_Sans',sans-serif] text-[33px] leading-9 font-medium whitespace-nowrap">jingyan.baidu.com</p>
        </div>
    );
}

export default function App() {
    return (
        <div className="flex h-screen flex-col bg-[linear-gradient(180deg,#84f3e4_0%,#93ece6_19%,#a2e2ec_30%,#aadeef_40%,#b6d7ef_52%,#bcd1ee_66%,#cac9f1_77%,#d3caf3_86%,#d9c1f5_100%)] px-[75px] font-['Inter','Noto_Sans_CJK_SC',sans-serif]">
            <div className="relative flex min-h-0 flex-1 flex-col bg-[#2d2120]">
                <MenuBar />
                <div className="flex min-h-0 flex-1 flex-col overflow-hidden rounded-md border border-[#4c4c4c] bg-[#282828]">
                    <TitleBar />
                    <TabRow />
                    <Ribbon />
                    <DocumentArea />
                    <StatusBar />
                </div>
                <Dock />
                <p className="pointer-events-none absolute inset-x-0 bottom-4 z-20 pl-6 text-center text-[47px] leading-[56px] font-black text-white [-webkit-text-stroke:8px_#000] [paint-order:stroke_fill]">
                    点击修改页码
                </p>
                <Watermark />
            </div>
        </div>
    );
}
